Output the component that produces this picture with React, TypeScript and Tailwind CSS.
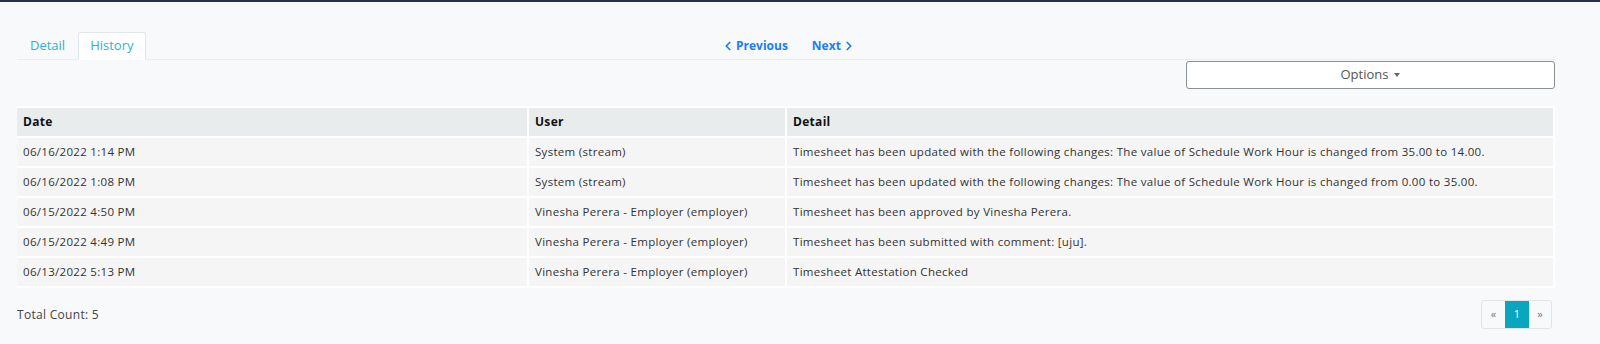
import { ChevronLeft, ChevronRight } from "lucide-react";

type Entry = { date: string; user: string; detail: string };

const ENTRIES: Entry[] = [
  {
    date: "06/16/2022 1:14 PM",
    user: "System (stream)",
    detail:
      "Timesheet has been updated with the following changes: The value of Schedule Work Hour is changed from 35.00 to 14.00.",
  },
  {
    date: "06/16/2022 1:08 PM",
    user: "System (stream)",
    detail:
      "Timesheet has been updated with the following changes: The value of Schedule Work Hour is changed from 0.00 to 35.00.",
  },
  {
    date: "06/15/2022 4:50 PM",
    user: "Vinesha Perera - Employer (employer)",
    detail: "Timesheet has been approved by Vinesha Perera.",
  },
  {
    date: "06/15/2022 4:49 PM",
    user: "Vinesha Perera - Employer (employer)",
    detail: "Timesheet has been submitted with comment: [uju].",
  },
  {
    date: "06/13/2022 5:13 PM",
    user: "Vinesha Perera - Employer (employer)",
    detail: "Timesheet Attestation Checked",
  },
];

export default function App() {
  return (
    <div
      className="w-[1600px] h-[344px] bg-[#f8f9fb] border-t-2 border-[#2b3150] text-[#333] overflow-hidden"
      style={{ fontFamily: '"Open Sans", "Liberation Sans", sans-serif' }}
    >
      <div className="pl-[17px] pr-[45px] pt-[31px]">
        {/* tabs + prev/next */}
        <div className="relative flex items-end border-b border-[#ebedf0] h-[27px]">
          <button type="button" className="h-[27px] px-[13px] text-[13px] text-[#2bb3cf]">
            Detail
          </button>
          <button
            type="button"
            className="h-[28px] -mb-px px-[11px] text-[13px] text-[#2bb3cf] bg-white border border-[#e3e6ea] border-b-white rounded-t-[3px]"
          >
            History
          </button>
          <div className="absolute left-[704px] top-[4px] flex items-center gap-[24px] text-[12px] font-bold text-[#1a7ff0]">
            <span className="flex items-center">
              <ChevronLeft size={14} strokeWidth={3} />
              <span className="ml-[1px]">Previous</span>
            </span>
            <span className="flex items-center">
              <span className="mr-[1px]">Next</span>
              <ChevronRight size={14} strokeWidth={3} />
            </span>
          </div>
        </div>

        <div className="flex justify-end">
          <button
            type="button"
            className="w-[369px] h-[28px] mt-px bg-white border border-[#8a8f96] rounded-[3px] text-[13px] text-[#555] flex items-center justify-center gap-[6px]"
          >
            Options
            <span className="w-0 h-0 border-l-[3px] border-r-[3px] border-t-[4px] border-l-transparent border-r-transparent border-t-[#666]" />
          </button>
        </div>

        <table className="mt-[17px] w-[1538px] border-collapse table-fixed text-[11.5px] tracking-[0.3px]">
          <colgroup>
            <col className="w-[511px]" />
            <col className="w-[258px]" />
            <col />
          </colgroup>
          <thead>
            <tr className="bg-[#e9ecec] h-[30px]">
              {["Date", "User", "Detail"].map((h) => (
                <th
                  key={h}
                  className="border-2 border-white first:border-l-0 text-left font-bold text-[#111] text-[12px] px-[6px]"
                >
                  {h}
                </th>
              ))}
            </tr>
          </thead>
          <tbody>
            {ENTRIES.map((e, i) => (
              <tr key={i} className="bg-[#f5f5f5] h-[30px] text-[#333]">
                <td className="border-2 border-white border-l-0 px-[6px]">{e.date}</td>
                <td className="border-2 border-white px-[6px]">{e.user}</td>
                <td className="border-2 border-white px-[6px]">{e.detail}</td>
              </tr>
            ))}
          </tbody>
        </table>

        <div className="flex items-center justify-between mt-[12px] pr-[3px]">
          <span className="text-[12px] tracking-[0.3px] text-[#444]">Total Count: 5</span>
          <div className="flex h-[29px] border border-[#e2e5e8] rounded-[3px] overflow-hidden text-[11px]">
            <span className="w-[23px] flex items-center justify-center text-[#777]">«</span>
            <span className="w-[24px] flex items-center justify-center bg-[#0aa6bf] text-white">1</span>
            <span className="w-[22px] flex items-center justify-center text-[#777]">»</span>
          </div>
        </div>
      </div>
    </div>
  );
}
